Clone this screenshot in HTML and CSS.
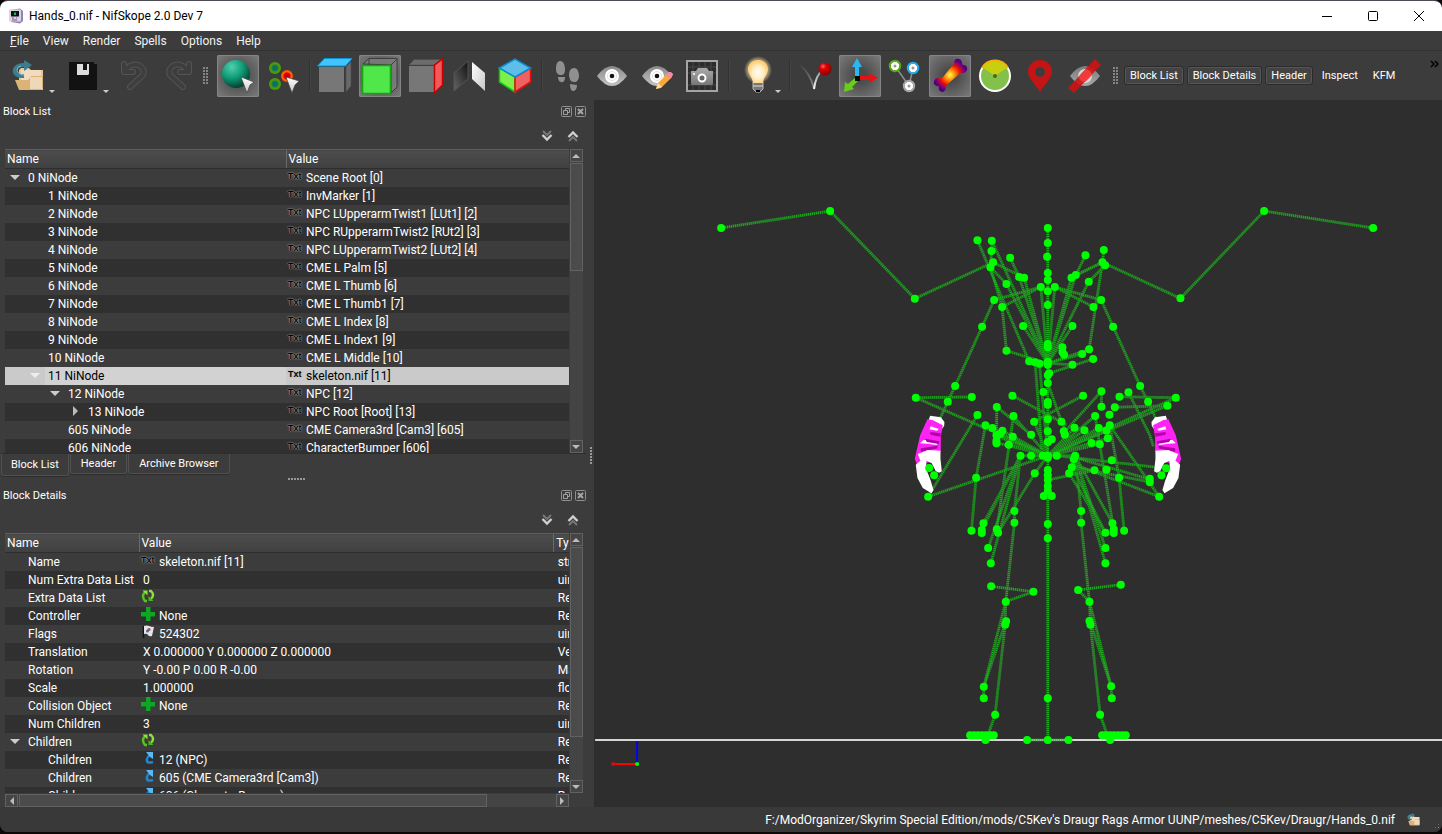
FILE: index.html
```html
<!DOCTYPE html>
<html lang="en">
<head>
<meta charset="utf-8">
<title>Hands_0.nif - NifSkope 2.0 Dev 7</title>
<link rel="stylesheet" href="styles.css">
</head>
<body>
<svg class="defs" aria-hidden="true">
  <defs>
    <radialGradient id="gTeal" cx=".35" cy=".25" r=".8"><stop offset="0" stop-color="#4fd0ae"/><stop offset=".5" stop-color="#109a78"/><stop offset="1" stop-color="#03382b"/></radialGradient>
    <radialGradient id="gGreenDot"><stop offset="0" stop-color="#0e6a5c"/><stop offset=".5" stop-color="#147a5a"/><stop offset=".65" stop-color="#4a9a0c"/><stop offset="1" stop-color="#4a9a0c"/></radialGradient>
    <radialGradient id="gRedDot"><stop offset="0" stop-color="#b00000"/><stop offset=".5" stop-color="#e00000"/><stop offset=".7" stop-color="#ff6a00"/><stop offset="1" stop-color="#ff4800"/></radialGradient>
    <radialGradient id="gBall" cx=".35" cy=".3" r=".8"><stop offset="0" stop-color="#ff6060"/><stop offset=".3" stop-color="#dd0000"/><stop offset="1" stop-color="#7a0000"/></radialGradient>
    <linearGradient id="gGrey" x1="0" y1="0" x2="0" y2="1"><stop offset="0" stop-color="#8a8a8a"/><stop offset="1" stop-color="#c4c4c4"/></linearGradient>
    <linearGradient id="gCursor" x1="0" y1="0" x2="0" y2="1"><stop offset="0" stop-color="#fff"/><stop offset="1" stop-color="#c8c8c8"/></linearGradient>
    <linearGradient id="gFlip" x1="1" y1="0" x2="0" y2="1"><stop offset="0" stop-color="#111"/><stop offset="1" stop-color="#666"/></linearGradient>
    <linearGradient id="gFlipW" x1="0" y1="0" x2="1" y2="1"><stop offset="0" stop-color="#fff"/><stop offset="1" stop-color="#c8c8c8"/></linearGradient>
    <radialGradient id="gBulb" cx=".5" cy=".55" r=".55"><stop offset="0" stop-color="#fffdf0"/><stop offset=".5" stop-color="#ffefc8"/><stop offset="1" stop-color="#ffc766"/></radialGradient>
    <radialGradient id="gGlow"><stop offset=".6" stop-color="#ffe9a8" stop-opacity=".75"/><stop offset="1" stop-color="#ffe9a8" stop-opacity="0"/></radialGradient>
    <linearGradient id="gRay" gradientUnits="userSpaceOnUse" x1="28" y1="15" x2="20" y2="34"><stop offset="0" stop-color="#888"/><stop offset="1" stop-color="#fff"/></linearGradient>
    <linearGradient id="gRayDark" gradientUnits="userSpaceOnUse" x1="5" y1="9" x2="20" y2="34"><stop offset="0" stop-color="#3c3c3c"/><stop offset="1" stop-color="#8a8a8a"/></linearGradient>
    <radialGradient id="gBone" gradientUnits="userSpaceOnUse" cx="21" cy="20" r="17"><stop offset="0" stop-color="#ffff50"/><stop offset=".35" stop-color="#ff7a00"/><stop offset=".6" stop-color="#f01000"/><stop offset=".85" stop-color="#7a0080"/><stop offset="1" stop-color="#4a0078"/></radialGradient>
    <linearGradient id="gCam" x1="0" y1="0" x2="0" y2="1"><stop offset="0" stop-color="#aaa"/><stop offset="1" stop-color="#777"/></linearGradient>
  </defs>
  <symbol id="i-open" viewBox="0 0 42 42"><path d="M12 35V15l2-2h8l2 2h12v20z" fill="#e6c597"/><path d="M14 15h20v10H14z" fill="#f1dcc0"/><path d="M8 25h13l3-4h12v12l-2 2H12z" fill="#dbb377"/><path d="M23 22h12v12H23z" fill="#efd8b9"/><path d="M17 21c-13 1-12-12 1-11" fill="none" stroke="#3b7d8e" stroke-width="4"/><path d="M17 5l8 5-8 6z" fill="#3b7d8e"/><path d="M17 20c-8 0-9-8-3-9" fill="none" stroke="#8fc0cc" stroke-width="1"/></symbol>
  <symbol id="i-save" viewBox="0 0 42 42"><path d="M8 7h25v2h3v26H8z" fill="#121212"/><path d="M16 9h6v6h4V9h2v10l-1 1H16z" fill="#ddd"/></symbol>
  <symbol id="i-undo" viewBox="0 0 42 42"><g fill="none" stroke-linecap="round" stroke-linejoin="round"><path d="M9 9v8h9M10 16c8-12 22-5 18 4L15 32" stroke="#545454" stroke-width="6"/><path d="M9 9v8h9M10 16c8-12 22-5 18 4L15 32" stroke="#3e3e3e" stroke-width="4"/></g></symbol>
  <symbol id="i-sphere" viewBox="0 0 42 42"><circle cx="19" cy="19" r="14" fill="url(#gTeal)"/><path d="M24 22l13 5-4 3-3 8z" fill="url(#gCursor)" stroke="#444" stroke-width=".7"/></symbol>
  <symbol id="i-points" viewBox="0 0 42 42"><circle cx="13" cy="13" r="6" fill="url(#gGreenDot)"/><circle cx="13" cy="29" r="6" fill="url(#gGreenDot)"/><circle cx="25" cy="21" r="6" fill="url(#gRedDot)"/><path d="M24 22l13 4-4 4-3 8z" fill="url(#gCursor)" stroke="#444" stroke-width=".7"/></symbol>
  <symbol id="i-top" viewBox="0 0 42 42"><path d="M5 12h25v25H5z" fill="#777"/><path d="M32 12l5-6v25l-5 6z" fill="#686868" stroke="#4a4a4a" stroke-width=".6"/><path d="M3.500 11l7-7.500H38L31.500 11z" fill="#42c5ff" stroke="#0a92d2"/></symbol>
  <symbol id="i-front" viewBox="0 0 42 42"><path d="M4 9l6-5.500h28V32l-6 6V10zM10 4v6M32 10l6-6" fill="#8a8a8a" fill-opacity=".6" stroke="#3c3c3c"/><path d="M3.500 10.500h28v28h-28z" fill="#4fe74a" stroke="#12a812" stroke-width="1.600"/></symbol>
  <symbol id="i-side" viewBox="0 0 42 42"><path d="M5 10l5-5.500h27L30 10z" fill="#6c6c6c" stroke="#4a4a4a" stroke-width=".5"/><path d="M5 11h25v26H5z" fill="#777"/><path d="M30.500 10l8-6v26l-8 8z" fill="#f05a5a" stroke="#c80000" stroke-width="1.500"/></symbol>
  <symbol id="i-flip" viewBox="0 0 42 42"><path d="M5 18L19 6v18L5 36z" fill="url(#gFlip)" stroke="#555"/><path d="M23 7l13 11v18L23 24z" fill="url(#gFlipW)"/></symbol>
  <symbol id="i-iso" viewBox="0 0 42 42"><path d="M5.500 13L21 22v15L5.500 27z" fill="#7df04a" stroke="#12c812" stroke-width="1.500"/><path d="M36.500 13L21 22v15l15.500-10z" fill="#f06262" stroke="#e01010" stroke-width="1.500"/><path d="M5.500 13L21 4l15.500 9L21 22z" fill="#5fbdea" stroke="#0a8ed2" stroke-width="1.500"/></symbol>
  <symbol id="i-feet" viewBox="0 0 42 42" fill="#8f8f8f"><path d="M14 6c4 0 5 5 5 8 0 4-1 6-4 6s-5-2-5-6 1-8 4-8zM12 22l7 0c0 3-1 6-4 5-2 0-3-3-3-5zM28 13c4 0 5 5 5 8s-2 7-5 6c-4 0-4-3-5-6 0-4 1-8 5-8zM24 29l7 1c0 4-2 6-4 6s-3-3-3-7z"/></symbol>
  <symbol id="i-eye" viewBox="0 0 42 42"><path d="M6 21q15-20 30 0-15 20-30 0z" fill="url(#gGrey)"/><circle cx="21" cy="21" r="7" fill="#fff"/><circle cx="21" cy="21" r="4.500" fill="none" stroke="#e2e2e2"/><circle cx="21" cy="21" r="2.300" fill="#111"/></symbol>
  <symbol id="i-eyepen" viewBox="0 0 42 42"><use href="#i-eye" width="42" height="42"/><path d="M20 34l2-6 10-10 4 4-11 11z" fill="#f9a93a"/><path d="M20 34l2-6 4 4z" fill="#f6dca6"/><path d="M30 20l3-3 2 0 2 2v1l-3 4z" fill="#f48ba0"/></symbol>
  <symbol id="i-camera" viewBox="0 0 42 42"><path d="M6 6h30v30H6z" fill="#2c2c2c" stroke="#a5a5a5" stroke-width="2"/><path d="M7 12h28M7 18h28M7 30h28M12 7v28M18 7v28M24 7v28M30 7v28" stroke="#494949"/><path d="M10 16h5l2-3h9l2 3h4v13l-1 1H11l-1-1z" fill="url(#gCam)"/><circle cx="21" cy="23" r="3.500" fill="#666" stroke="#fff" stroke-width="2"/><circle cx="13" cy="19" r="1" fill="#fff"/></symbol>
  <symbol id="i-bulb" viewBox="0 0 42 42"><circle cx="25" cy="15" r="14" fill="url(#gGlow)"/><path d="M20 27h10v7l-3 3h-4l-3-3z" fill="#777" stroke="#bbb"/><path d="M20 31h10" stroke="#ddd"/><path d="M23 35h4v2h-4z" fill="#000"/><path d="M25 5c7 0 10 5 10 9 0 5-4 7-5 14H20c-1-7-5-9-5-14 0-4 3-9 10-9z" fill="url(#gBulb)"/></symbol>
  <symbol id="i-normal" viewBox="0 0 42 42"><path d="M5 9q11 9 15 24" fill="none" stroke="url(#gRayDark)" stroke-width="2"/><path d="M20 34q2-14 8-18" fill="none" stroke="url(#gRay)" stroke-width="2"/><circle cx="31" cy="14" r="6.500" fill="url(#gBall)"/></symbol>
  <symbol id="i-axes" viewBox="0 0 42 42"><path d="M16 21h4v-9h3L18 3l-5 9h3z" fill="#2bb7f3"/><path d="M19 21v4h11v3l9-5-9-5v3z" fill="#e41212"/><path d="M17 22l3 3-7 7 2 2-10 3 1-10 3 2z" fill="#67cf17"/><path d="M16 21h5v5h-5z" fill="#060606"/></symbol>
  <symbol id="i-graph" viewBox="0 0 42 42"><path d="M11 11l14 20 4-18" fill="none" stroke="#8c8c8c" stroke-width="1.500"/><g fill="#999" stroke="#fff" stroke-width="3"><circle cx="11" cy="11" r="3"/><circle cx="29" cy="13" r="3"/><circle cx="25" cy="31" r="3"/></g><g fill="none" stroke-width="2"><circle cx="11" cy="11" r="5.200" stroke="#58ad13"/><circle cx="29" cy="13" r="5.200" stroke="#22aeea"/><circle cx="25" cy="31" r="5.200" stroke="#a8a8a8"/></g></symbol>
  <symbol id="i-bone" viewBox="0 0 42 42"><path d="M23 11q3-1 2-4 1-4 5-3 3 1 3 5 0 1 2 1 4 1 3 5-2 4-5 3-3 0-4 2L19 29q-3 1-2 4-1 4-4 4-4-1-3-5 0-1-2-1-4-1-3-5 2-4 5-3 3 1 4-1z" fill="url(#gBone)"/></symbol>
  <symbol id="i-clock" viewBox="0 0 42 42"><circle cx="21" cy="21" r="15" fill="#84c14a" stroke="#fff" stroke-width="2"/><path d="M21 21L8 12a16 16 0 0126 0z" fill="#c6d010"/><path d="M8 13a15 15 0 0126 0" fill="none" stroke="#f8b008" stroke-width="2"/><circle cx="21" cy="21" r="2" fill="#4a6a1c"/></symbol>
  <symbol id="i-pin" viewBox="0 0 42 42"><path d="M21 5c7 0 12 5 12 12 0 6-7 12-12 20C16 29 9 23 9 17 9 10 14 5 21 5zm0 7a5 5 0 100 10 5 5 0 000-10z" fill="#c41414" fill-rule="evenodd"/></symbol>
  <symbol id="i-eyeoff" viewBox="0 0 42 42"><use href="#i-eye" width="42" height="42" opacity=".8"/><path d="M4 33L31 4l6 6L10 38z" fill="#d01212" fill-opacity=".9"/><path d="M15 22l7-8q6 2 6 6l-7 7q-5 0-6-5z" fill="#f23a3a"/></symbol>
  <symbol id="i-float" viewBox="0 0 11 11"><rect x=".5" y=".5" width="10" height="10" rx="1" fill="none" stroke="#8f8f8f"/><path d="M4.500 4V2.500h4v4H7M2.500 4.500h4v4h-4z" fill="none" stroke="#a0a0a0"/></symbol>
  <symbol id="i-close" viewBox="0 0 11 11"><rect x=".5" y=".5" width="10" height="10" rx="1" fill="none" stroke="#8f8f8f"/><path d="M3 3l5 5M8 3L3 8" stroke="#a6a6a6" stroke-width="2"/></symbol>
  <symbol id="i-down" viewBox="0 0 12 12"><path d="M2 1l4 4 4-4" fill="none" stroke="#777" stroke-width="2"/><path d="M1.500 5L6 9.500 10.500 5" fill="none" stroke="#cfcfcf" stroke-width="2.400"/></symbol>
  <symbol id="i-refresh" viewBox="0 0 14 14"><path d="M6 12H4Q0 7 4 3" fill="none" stroke="#58c41c" stroke-width="2.400"/><path d="M1.500 1.500h5v5z" fill="#8be23c"/><path d="M8 2h2q4 4 0 8" fill="none" stroke="#8be23c" stroke-width="2.400"/><path d="M12.500 12h-5V7z" fill="#4cb414"/></symbol>
  <symbol id="i-plus" viewBox="0 0 14 14"><path d="M5 0h4.500v5H14v4.500H9.500V14H5V9.500H0V5h5z" fill="#0ca822"/></symbol>
  <symbol id="i-flag" viewBox="0 0 14 14"><path d="M2.500 1v12" stroke="#111" stroke-width="1.500"/><path d="M3 1q3-1 5 0t5 1l-2 9q-3 1-4-1T3 9z" fill="#e4e4e4"/><circle cx="8" cy="4.500" r="1.500" fill="#d2402a"/><circle cx="6.500" cy="6" r="1.500" fill="#3c68c8"/></symbol>
  <symbol id="i-link" viewBox="0 0 14 14"><path d="M12 11Q5 13 6 8q0-2 3-4" fill="none" stroke="#1f86d0" stroke-width="2.600"/><path d="M5 1h7v7L9 6z" fill="#5cb8f0"/></symbol>
  <symbol id="i-app" viewBox="0 0 16 16"><path d="M2 2l10-1.500L15 3v10l-3 2.500L3 14z" fill="#8d86b4"/><rect x="1" y="1.500" width="12" height="12" rx="1" fill="#d8d4e6"/><path d="M3 3h8v5.500H3z" fill="#0a1410"/><path d="M6 4.500h2V7H6z" fill="#2ab45c"/><path d="M4 10h2M8 10h1M4 12h5" stroke="#8a4a78"/></symbol>
</svg>

<div class="window">
  <header class="titlebar">
    <svg class="app-icon"><use href="#i-app"/></svg>
    <h1 class="window-title">Hands_0.nif - NifSkope 2.0 Dev 7</h1>
    <div class="window-controls">
      <button class="win-btn" aria-label="Minimize"><svg width="10" height="10"><path d="M0 5.500h10" stroke="#000"/></svg></button>
      <button class="win-btn" aria-label="Maximize"><svg width="10" height="10"><rect x=".5" y=".5" width="9" height="9" rx="1" fill="none" stroke="#000"/></svg></button>
      <button class="win-btn" aria-label="Close"><svg width="10" height="10"><path d="M0 0l10 10M10 0L0 10" stroke="#000"/></svg></button>
    </div>
  </header>

  <nav class="menubar">
    <button class="menu"><u>F</u>ile</button><button class="menu">View</button><button class="menu">Render</button><button class="menu">Spells</button><button class="menu">Options</button><button class="menu">Help</button>
  </nav>

  <div class="toolbar">
    <button class="tool split" aria-label="Open"><svg class="ico"><use href="#i-open"/></svg></button>
    <button class="tool split" aria-label="Save"><svg class="ico"><use href="#i-save"/></svg></button>
    <button class="tool slim" aria-label="Undo"><svg class="ico"><use href="#i-undo"/></svg></button>
    <button class="tool slim" aria-label="Redo"><svg class="ico mirror"><use href="#i-undo"/></svg></button>
    <span class="grip wide"></span>
    <button class="tool on" aria-label="Select object"><svg class="ico"><use href="#i-sphere"/></svg></button>
    <button class="tool" aria-label="Select vertex"><svg class="ico"><use href="#i-points"/></svg></button>
    <span class="sep"></span>
    <button class="tool" aria-label="Top view"><svg class="ico"><use href="#i-top"/></svg></button>
    <button class="tool on" aria-label="Front view"><svg class="ico"><use href="#i-front"/></svg></button>
    <button class="tool" aria-label="Side view"><svg class="ico"><use href="#i-side"/></svg></button>
    <button class="tool" aria-label="Flip view"><svg class="ico"><use href="#i-flip"/></svg></button>
    <button class="tool" aria-label="Perspective"><svg class="ico"><use href="#i-iso"/></svg></button>
    <span class="sep"></span>
    <button class="tool" aria-label="Walk"><svg class="ico"><use href="#i-feet"/></svg></button>
    <button class="tool" aria-label="Load view"><svg class="ico"><use href="#i-eye"/></svg></button>
    <button class="tool" aria-label="Save view"><svg class="ico"><use href="#i-eyepen"/></svg></button>
    <button class="tool" aria-label="Screenshot"><svg class="ico"><use href="#i-camera"/></svg></button>
    <span class="sep"></span>
    <button class="tool split" aria-label="Lighting"><svg class="ico"><use href="#i-bulb"/></svg></button>
    <span class="sep"></span>
    <button class="tool" aria-label="Vertex normals"><svg class="ico"><use href="#i-normal"/></svg></button>
    <button class="tool on" aria-label="Axes"><svg class="ico"><use href="#i-axes"/></svg></button>
    <button class="tool" aria-label="Nodes"><svg class="ico"><use href="#i-graph"/></svg></button>
    <button class="tool on" aria-label="Skinning"><svg class="ico"><use href="#i-bone"/></svg></button>
    <button class="tool" aria-label="Constraints"><svg class="ico"><use href="#i-clock"/></svg></button>
    <button class="tool" aria-label="Markers"><svg class="ico"><use href="#i-pin"/></svg></button>
    <button class="tool" aria-label="Hidden"><svg class="ico"><use href="#i-eyeoff"/></svg></button>
    <span class="grip"></span>
    <div class="toggles">
      <button class="toggle pressed">Block List</button><button class="toggle pressed">Block Details</button><button class="toggle pressed">Header</button><button class="toggle">Inspect</button><button class="toggle">KFM</button>
    </div>
    <button class="more" aria-label="More tools"><svg width="9" height="8"><path d="M1 1l3 3-3 3M5 1l3 3-3 3" fill="none" stroke="#000" stroke-width="1.500"/></svg></button>
  </div>

  <main class="workspace">
    <aside class="dock">
      <section class="panel blocks">
        <div class="panel-title"><h2>Block List</h2><button class="mini" aria-label="Float"><svg><use href="#i-float"/></svg></button><button class="mini" aria-label="Close panel"><svg><use href="#i-close"/></svg></button></div>
        <div class="panel-tools"><button class="fold" aria-label="Expand all"><svg><use href="#i-down"/></svg></button><button class="fold" aria-label="Collapse all"><svg class="flip"><use href="#i-down"/></svg></button></div>
        <div class="view">
          <div class="clip">
            <table class="tree block-tree">
              <colgroup><col class="half"><col></colgroup>
              <thead><tr><th>Name</th><th>Value</th></tr></thead>
              <tbody>
                <tr><td class="l0"><button class="tw open" aria-label="Collapse"></button>0 NiNode</td><td><i class="txt">Txt</i>Scene Root [0]</td></tr>
                <tr><td class="l1">1 NiNode</td><td><i class="txt">Txt</i>InvMarker [1]</td></tr>
                <tr><td class="l1">2 NiNode</td><td><i class="txt">Txt</i>NPC LUpperarmTwist1 [LUt1] [2]</td></tr>
                <tr><td class="l1">3 NiNode</td><td><i class="txt">Txt</i>NPC RUpperarmTwist2 [RUt2] [3]</td></tr>
                <tr><td class="l1">4 NiNode</td><td><i class="txt">Txt</i>NPC LUpperarmTwist2 [LUt2] [4]</td></tr>
                <tr><td class="l1">5 NiNode</td><td><i class="txt">Txt</i>CME L Palm [5]</td></tr>
                <tr><td class="l1">6 NiNode</td><td><i class="txt">Txt</i>CME L Thumb [6]</td></tr>
                <tr><td class="l1">7 NiNode</td><td><i class="txt">Txt</i>CME L Thumb1 [7]</td></tr>
                <tr><td class="l1">8 NiNode</td><td><i class="txt">Txt</i>CME L Index [8]</td></tr>
                <tr><td class="l1">9 NiNode</td><td><i class="txt">Txt</i>CME L Index1 [9]</td></tr>
                <tr><td class="l1">10 NiNode</td><td><i class="txt">Txt</i>CME L Middle [10]</td></tr>
                <tr class="selected"><td class="l1"><button class="tw open" aria-label="Collapse"></button>11 NiNode</td><td><i class="txt">Txt</i>skeleton.nif [11]</td></tr>
                <tr><td class="l2"><button class="tw open" aria-label="Collapse"></button>12 NiNode</td><td><i class="txt">Txt</i>NPC [12]</td></tr>
                <tr><td class="l3"><button class="tw" aria-label="Expand"></button>13 NiNode</td><td><i class="txt">Txt</i>NPC Root [Root] [13]</td></tr>
                <tr><td class="l2">605 NiNode</td><td><i class="txt">Txt</i>CME Camera3rd [Cam3] [605]</td></tr>
                <tr><td class="l2">606 NiNode</td><td><i class="txt">Txt</i>CharacterBumper [606]</td></tr>
              </tbody>
            </table>
          </div>
          <div class="vbar"><button class="arrow up" aria-label="Scroll up"></button><div class="track"><div class="thumb short"></div></div><button class="arrow down" aria-label="Scroll down"></button></div>
        </div>
        <div class="tabs"><button class="tab current">Block List</button><button class="tab">Header</button><button class="tab">Archive Browser</button></div>
        <div class="hsplit"></div>
      </section>

      <section class="panel details">
        <div class="panel-title"><h2>Block Details</h2><button class="mini" aria-label="Float"><svg><use href="#i-float"/></svg></button><button class="mini" aria-label="Close panel"><svg><use href="#i-close"/></svg></button></div>
        <div class="panel-tools"><button class="fold" aria-label="Expand all"><svg><use href="#i-down"/></svg></button><button class="fold" aria-label="Collapse all"><svg class="flip"><use href="#i-down"/></svg></button></div>
        <div class="view">
          <div class="clip">
            <table class="tree detail-tree">
              <colgroup><col class="c-name"><col><col class="c-type"></colgroup>
              <thead><tr><th>Name</th><th>Value</th><th>Type</th></tr></thead>
              <tbody>
                <tr><td class="l0">Name</td><td><i class="txt">Txt</i>skeleton.nif [11]</td><td>string</td></tr>
                <tr><td class="l0">Num Extra Data List</td><td>0</td><td>uint</td></tr>
                <tr><td class="l0">Extra Data List</td><td><svg class="ri"><use href="#i-refresh"/></svg></td><td>Ref</td></tr>
                <tr><td class="l0">Controller</td><td><svg class="ri"><use href="#i-plus"/></svg>None</td><td>Ref</td></tr>
                <tr><td class="l0">Flags</td><td><svg class="ri"><use href="#i-flag"/></svg>524302</td><td>uint</td></tr>
                <tr><td class="l0">Translation</td><td>X 0.000000 Y 0.000000 Z 0.000000</td><td>Vector3</td></tr>
                <tr><td class="l0">Rotation</td><td>Y -0.00 P 0.00 R -0.00</td><td>Matrix33</td></tr>
                <tr><td class="l0">Scale</td><td>1.000000</td><td>float</td></tr>
                <tr><td class="l0">Collision Object</td><td><svg class="ri"><use href="#i-plus"/></svg>None</td><td>Ref</td></tr>
                <tr><td class="l0">Num Children</td><td>3</td><td>uint</td></tr>
                <tr><td class="l0"><button class="tw open" aria-label="Collapse"></button>Children</td><td><svg class="ri"><use href="#i-refresh"/></svg></td><td>Ref</td></tr>
                <tr><td class="l1">Children</td><td><svg class="ri"><use href="#i-link"/></svg>12 (NPC)</td><td>Ref</td></tr>
                <tr><td class="l1">Children</td><td><svg class="ri"><use href="#i-link"/></svg>605 (CME Camera3rd [Cam3])</td><td>Ref</td></tr>
                <tr><td class="l1">Children</td><td><svg class="ri"><use href="#i-link"/></svg>606 (CharacterBumper)</td><td>Ref</td></tr>
              </tbody>
            </table>
          </div>
          <div class="vbar"><button class="arrow up" aria-label="Scroll up"></button><div class="track"><div class="thumb tall"></div></div><button class="arrow down" aria-label="Scroll down"></button></div>
          <div class="hbar"><button class="arrow left" aria-label="Scroll left"></button><div class="track"><div class="thumb"></div></div><button class="arrow right" aria-label="Scroll right"></button></div>
        </div>
      </section>
      <span class="vsplit"></span>
    </aside>

    <section class="viewport" aria-label="3D view">
      <svg id="scene" viewBox="-918 -270 2544 2121" preserveAspectRatio="xMidYMid meet">
        <path d="M-915 1650H1626" stroke="#d6d6d6" stroke-width="6"/>
        <path id="glow" class="bone-base"/>
        <path id="bones" class="bones"/>
        <g id="hand">
          <path d="M90 677l32 5 11 14-1 12-6 8-14-2-29-16z" fill="#fff"/>
          <path d="M82 688l15 2 31 16-6 36v40l-10 30-62 12-6-18 16-70z" fill="#ff22f4"/>
          <path d="M92 709l24 8-5 5-23-4zM60 760l10-10 14 0 30 6-4 9-28-4z" fill="#fff"/>
          <path d="M90 726l32 4-1 10-30-6zM75 746l42 8-1 8-36-6zM62 775l50-8v8l-50 10z" fill="#b000aa"/>
          <path d="M53 792l30-12 38 2v24l4 38-8 4-10-4-12-24-16-8-1 24 14 36 8 28-6 10-26-16-16-30-5-40 14-12z" fill="#fff"/>
        </g>
        <use href="#hand" transform="translate(887 0) scale(-1 1)"/>
        <g id="joints" fill="#0f0"></g>
        <g stroke-width="6"><path d="M-861 1722h72" stroke="#f00"/><path d="M-789 1722v-69" stroke="#00f"/></g>
        <circle cx="-861" cy="1722" r="6" fill="#d01010"/><circle cx="-789" cy="1722" r="6" fill="#0f0"/>
      </svg>
    </section>
  </main>

  <footer class="statusbar">
    <span>F:/ModOrganizer/Skyrim Special Edition/mods/C5Kev's Draugr Rags Armor UUNP/meshes/C5Kev/Draugr/Hands_0.nif</span>
    <button class="status-open" aria-label="Open folder"><svg><use href="#i-open"/></svg></button>
    <span class="sizegrip"></span>
  </footer>
</div>
<script src="scene.js"></script>
</body>
</html>
```
FILE: styles.css
```css
* { box-sizing: border-box; }

body {
  margin: 0;
  height: 100vh;
  background: #0b0807;
  font: 12px/18px Roboto, "Open Sans", sans-serif;
  color: #fff;
  overflow: hidden;
}

button {
  margin: 0;
  padding: 0;
  border: 0;
  background: none;
  color: inherit;
  font: inherit;
}

svg { display: block; }

.defs { position: absolute; width: 0; height: 0; }

.window {
  display: flex;
  flex-direction: column;
  height: calc(100vh - 2px);
  border-radius: 8px;
  overflow: hidden;
  background: #3c3c3c;
  border-top: 1px solid #4d4a55;
}

.titlebar {
  display: flex;
  align-items: center;
  gap: 5px;
  flex: 0 0 30px;
  padding-left: 8px;
  background: #fff;
  color: #000;
}
.app-icon { width: 16px; height: 16px; }
.window-title { flex: 1; margin: 0; font-size: 12px; font-weight: 400; }
.window-controls { display: flex; align-self: stretch; }
.win-btn { display: flex; align-items: center; justify-content: center; width: 46px; }

.menubar {
  display: flex;
  flex: 0 0 20px;
  gap: 14px;
  padding-left: 10px;
  border-bottom: 1px solid #323232;
  color: #f2f2f2;
}

.toolbar {
  display: flex;
  align-items: center;
  flex: 0 0 49px;
  gap: 3px;
  padding-left: 7px;
}
.tool {
  flex: none;
  width: 42px;
  height: 42px;
  border-radius: 2px;
}
.ico { width: 42px; height: 42px; }
.mirror { transform: scaleX(-1); }
.slim { width: 38px; }
.split { display: flex; align-items: flex-end; width: 51px; }
.split::after {
  content: "";
  margin-bottom: 4px;
  border: 3px solid transparent;
  border-top-color: #ccc;
  border-bottom-width: 0;
}
.on {
  background: radial-gradient(circle at 50% 50%, #4a4a4a 20%, #7d7d7d 100%);
  box-shadow: inset 0 0 0 1px #858585;
}
.sep { flex: none; width: 4px; height: 31px; background: linear-gradient(90deg, transparent 2px, #323232 2px, #323232 3px, #444 3px); }
.grip {
  flex: none;
  width: 12px;
  height: 17px;
  padding: 0 2px 0 4px;
  background: conic-gradient(from 270deg at 2px 2px, #858585 90deg, transparent 0) 0 0 / 3px 3px;
  background-origin: content-box;
  background-clip: content-box;
}
.wide { width: 17px; padding: 0 5px 0 6px; }
.toggles { display: flex; gap: 3px; }
.toggle { height: 19px; padding: 0 5px; font-size: 11px; line-height: 17px; border: 1px solid transparent; border-radius: 3px; white-space: nowrap; }
.pressed { background: #434343; border-color: #2b2b2b; box-shadow: inset 0 0 0 1px #565656; }
.more { align-self: flex-start; margin: 9px 3px 0 auto; }

.workspace {
  display: grid;
  grid-template-columns: minmax(0, 7fr) minmax(0, 10fr);
  flex: 1;
  min-height: 0;
}

.dock {
  display: flex;
  flex-direction: column;
  position: relative;
  min-height: 0;
}
.panel { display: flex; flex-direction: column; min-height: 0; }
.blocks { flex: 384 1 0; }
.details { flex: 323 1 0; }

.panel-title { display: flex; align-items: center; gap: 3px; flex: 0 0 23px; padding: 0 8px 0 3px; }
.panel-title h2 { flex: 1; margin: 0; font-size: 11px; font-weight: 400; }
.mini svg { width: 11px; height: 11px; }
.panel-tools { display: flex; justify-content: flex-end; align-items: center; gap: 14px; flex: 0 0 26px; padding-right: 15px; }
.fold svg { width: 12px; height: 12px; }
.flip { transform: scaleY(-1); }

.view {
  display: grid;
  grid-template: minmax(0, 1fr) auto / minmax(0, 1fr) 14px;
  flex: 1;
  min-height: 0;
  padding: 0 11px 0 5px;
}
.clip { overflow: hidden; }

.tree { width: 100%; table-layout: fixed; border-collapse: collapse; }
.half { width: 281px; }
.c-name { width: 134px; }
.c-type { width: 15px; }
.tree th {
  height: 19px;
  padding: 0 2px;
  font-weight: 400;
  text-align: left;
  line-height: 17px;
  background: linear-gradient(#4d4d4d, #404040);
  border-top: 1px solid #5f5f5f;
  border-bottom: 1px solid #2e2e2e;
  overflow: hidden;
}
.tree th + th { border-left: 1px solid #6a6a6a; }
.tree td { height: 18px; padding: 0 0 0 2px; line-height: 18px; white-space: nowrap; overflow: hidden; }
.tree tbody tr:nth-child(even) { background: #303030; }
.detail-tree td:nth-child(2) { padding-left: 4px; }
.detail-tree td:nth-child(3) { padding-left: 4px; }
.tree td.l0 { padding-left: 23px; }
.tree td.l1 { padding-left: 43px; }
.tree td.l2 { padding-left: 63px; }
.tree td.l3 { padding-left: 83px; }
.tree tbody tr.selected { background: #cacaca; color: #000; }
.selected td:first-child { background: linear-gradient(90deg, transparent 40px, #d2d2d2 40px); }

.tw { float: left; width: 18px; height: 18px; margin-left: -18px; }
.tw::before {
  content: "";
  display: block;
  width: 0;
  margin: 0 0 2px 3px;
  border: 5px solid transparent;
  border-left-color: #bbb;
  border-right-width: 0;
}
.tw.open::before { margin-left: 0; border: 5px solid transparent; border-top-color: #ccc; border-bottom-width: 0; }
.selected .tw::before { border-top-color: #eee; }

.txt {
  display: inline-block;
  width: 18px;
  font: bold 9px/14px "Liberation Sans", sans-serif;
  color: #000;
  text-shadow: 0 0 1px #bbb, 0 0 2px #aaa;
  vertical-align: top;
}
.ri { display: inline-block; width: 14px; height: 14px; margin: 0 4px 0 -2px; vertical-align: top; }
.detail-tree .txt { margin-left: -2px; }

.vbar { display: flex; flex-direction: column; margin-left: 1px; }
.hbar { display: flex; grid-column: 1; margin-top: 1px; }
.arrow {
  flex: none;
  display: flex;
  align-items: center;
  justify-content: center;
  width: 13px;
  height: 13px;
  background: #454545;
  border: 1px solid #626262;
}
.arrow::before { content: ""; border: 4px solid transparent; }
.up::before { border-bottom-color: #bbb; border-top-width: 0; }
.down::before { border-top-color: #bbb; border-bottom-width: 0; }
.left::before { border-right-color: #bbb; border-left-width: 0; }
.right::before { border-left-color: #bbb; border-right-width: 0; }
.track { flex: 1; background: #444; min-height: 0; }
.thumb { border: 1px solid #626262; background: #4b4b4b; }
.vbar .thumb { width: 13px; margin-top: 1px; }
.short { height: 39%; }
.tall { height: 81%; }
.hbar .thumb { width: 87%; height: 13px; margin-left: 1px; }

.tabs { display: flex; align-items: flex-start; gap: 1px; flex: 0 0 23px; margin: 0 8px 0 1px; border-top: 1px solid #2e2e2e; font-size: 11px; }
.tab { height: 20px; padding: 0 10px; line-height: 19px; border: 1px solid #505050; border-top: 0; border-radius: 0 0 3px 3px; box-shadow: 0 1px #2d2d2d; }
.tab.current { height: 22px; padding: 0 9px; line-height: 22px; }
.hsplit { flex: 0 0 8px; width: 18px; margin: 0 auto; background: conic-gradient(from 270deg at 2px 2px, #999 90deg, transparent 0) 0 2px / 3px 3px repeat-x; }
.vsplit { position: absolute; right: 1px; top: 347px; width: 3px; height: 18px; background: conic-gradient(from 270deg at 2px 2px, #999 90deg, transparent 0) 0 0 / 3px 3px; }

.viewport { background: #2e2e2e; min-height: 0; overflow: hidden; }
#scene { width: 100%; height: 100%; }
.bone-base { fill: none; stroke: #26a026; stroke-width: 9; stroke-opacity: .35; }
.bones { fill: none; stroke: #18c018; stroke-width: 8; stroke-dasharray: 3 3; stroke-opacity: .8; }

.statusbar { display: flex; align-items: center; justify-content: flex-end; flex: 0 0 25px; padding-right: 20px; gap: 10px; position: relative; background: #393939; white-space: nowrap; }
.status-open svg { width: 17px; height: 17px; }
.sizegrip { position: absolute; right: 2px; bottom: 3px; width: 6px; height: 6px; background: radial-gradient(circle, #999 1px, transparent 1px) 0 0 / 3px 3px; clip-path: polygon(100% 0, 100% 100%, 0 100%); }
```
FILE: scene.js
```js
// Skeleton drawing: each string is a polyline of "x,y" joints.
const bones = `
-537,114 -210,63 44,326 279,217 372,263 443,520|1419,114 1092,63 841,325 607,217 514,263 443,520
275,152 274,183 271,232 306,351 319,482 443,520|611,180 607,217 567,478 443,520
232,151 387,514 443,520|275,152 443,520|330,203 357,261 443,520|271,232 319,282 443,520
556,196 527,255 443,520|527,255 607,217|615,226 566,275 443,520
443,520 422,291 282,330|422,291 306,351|443,520 464,291 603,330|464,291 580,351
282,330 246,410 165,588 143,635 118,690|603,330 639,410 720,588 744,635 769,690
369,408 443,520|517,408 443,520|546,492 443,520|579,507 447,550|517,524 443,520 418,521|405,517 425,780
443,114 443,1650|443,114 443,520|443,579 484,695 505,740|418,521 443,797
47,623 443,797|47,623 215,621|84,920 443,797|337,617 500,705|549,617 402,695
290,651 289,758|290,651 393,734|604,604 491,728|604,604 604,650|658,620 827,623 443,797|644,652 802,647 443,797
685,607 749,735 760,770|629,706 777,920|629,706 657,863 672,1022|256,706 228,863 214,1022|232,675 84,920
340,678 290,1018|361,797 250,1000|361,797 264,1074|361,797 245,1020|361,797 272,1120|404,850 294,1028|443,797 404,850
507,850 616,1028|525,797 637,1000|525,797 616,1074|525,797 616,1120|585,678 641,1020|515,830 616,1028
525,797 543,963 543,998 568,1235 571,1304 600,1574 622,1636|361,797 343,963 343,998 317,1235 315,1304 285,1574 263,1636
317,1235 251,1490 251,1525|568,1235 633,1489 635,1525|317,1294 251,1490|570,1294 633,1489
273,1189 400,1205 317,1235|662,1184 534,1200 568,1235
515,800 749,868|515,820 777,920|470,797 770,832|443,870 583,841|515,830 749,876|361,797 525,797
443,797 574,759|443,797 599,763|443,797 623,745|443,797 596,714|443,797 619,722|443,797 523,713|443,797 553,721
443,797 585,678|443,797 629,706|443,797 402,695|443,797 277,714|443,797 307,722|443,797 289,738|443,797 338,740
443,797 326,764|443,797 289,758|443,797 340,678|443,797 256,706|381,1650 505,1650`;

const joints = `
443,114 443,159 441,200 443,249 443,270 443,304 443,345 443,462 443,472 443,515 443,524 447,550 443,556 443,579
232,151 275,152 274,183 279,217 271,232 330,203 357,261 372,263 319,282 422,291 282,330 306,351 246,410 369,408
319,482 387,514 405,517 418,521 165,588 44,326 -537,114 -210,63 1092,63 1419,114 556,196 611,180 607,217 615,226
527,255 514,263 566,275 464,291 603,330 580,351 639,410 517,408 487,472 487,486 492,494 546,492 567,478 579,507
517,524 720,588 841,325 143,635 47,623 215,621 337,617 430,606 443,636 443,644 549,617 604,604 604,650 658,620
685,607 744,635 827,623 802,647 644,652 290,651 232,675 256,706 277,714 307,722 289,736 300,732 289,752 289,760
340,678 338,740 326,764 402,695 393,734 443,688 443,724 455,748 443,756 484,695 491,724 494,734 523,713 553,721
585,678 596,714 628,674 629,706 619,722 623,745 574,759 599,763 361,797 393,797 428,797 443,797 443,803 470,797
525,797 521,808 228,863 404,850 443,840 443,856 443,870 443,888 443,903 431,918 455,918 507,850 515,832 583,841
619,839 635,811 657,863 749,866 749,877 777,920 84,920 343,963 343,998 443,1002 443,1045 543,963 543,998 214,1022
250,1000 245,1020 245,1029 290,1018 294,1028 264,1074 272,1120 616,1028 637,1000 641,1018 641,1029 672,1022
616,1074 616,1120 87,834 102,856 798,835 784,856 273,1189 400,1205 317,1235 318,1294 315,1304 534,1200
662,1184 568,1235 568,1293 571,1304 251,1490 251,1525 285,1574 633,1489 635,1525 600,1574 443,1525 381,1650
443,1650 505,1650 210,1636 222,1636 234,1636 246,1636 258,1636 270,1636 281,1636 256,1650
606,1636 618,1636 630,1636 642,1636 654,1636 666,1636 677,1636 630,1650`;

const outline = bones.trim().split(/[|\n]/).map(line => "M" + line.trim().split(" ").join("L")).join("");
document.getElementById("glow").setAttribute("d", outline);
document.getElementById("bones").setAttribute("d", outline);

const group = document.getElementById("joints");
for (const pair of joints.trim().split(/\s+/)) {
  const [x, y] = pair.split(",");
  const dot = document.createElementNS("http://www.w3.org/2000/svg", "circle");
  dot.setAttribute("cx", x);
  dot.setAttribute("cy", y);
  dot.setAttribute("r", 12);
  group.appendChild(dot);
}
```
